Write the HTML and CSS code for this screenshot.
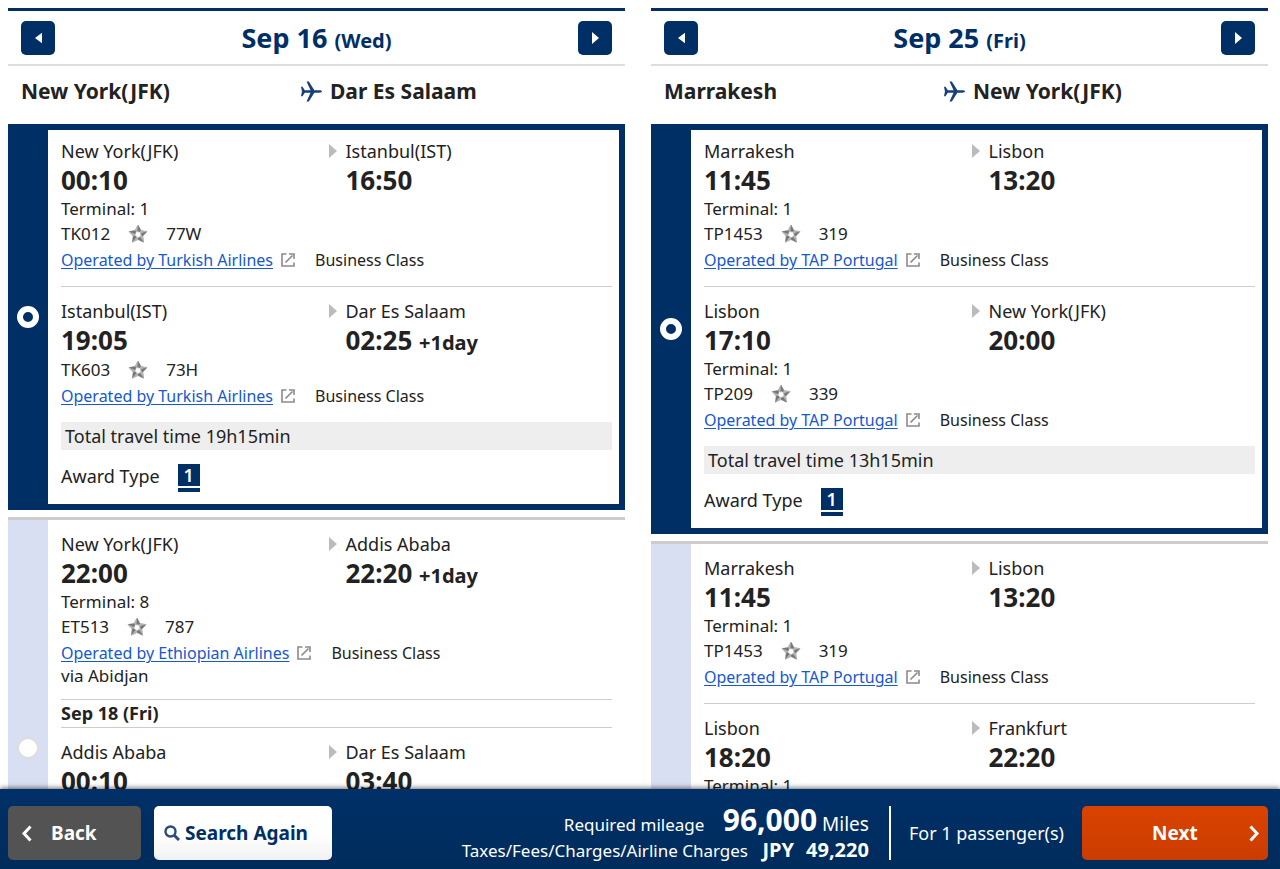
FILE: index.html
```html
<!DOCTYPE html>
<html lang="en">
<head>
<meta charset="utf-8">
<meta name="viewport" content="width=device-width, initial-scale=1">
<title>Award flight selection</title>
<link rel="stylesheet" href="styles.css">
</head>
<body>
<svg class="sprite" aria-hidden="true">
  <symbol id="plane" viewBox="0 0 22 22"><path d="M0 6h1.600L4 9.800h6L5.800.5h2.400L14 9.800h5.200c1.500 0 2.800.5 2.800 1.200s-1.300 1.200-2.800 1.200H14L8.200 21.500H5.800L10 12.200H4L1.600 16H0l1-5z"/></symbol>
  <symbol id="star" viewBox="0 0 20 20">
    <path d="M10 1 12.900 6.500 19 7.600 14.800 12 15.600 18.200 10 15.500 4.400 18.200 5.200 12 1 7.600 7.100 6.500zM8 7.700 6.700 11.500 10 14 13.300 11.500 12 7.700z" fill="#b4b4b4" stroke="#b4b4b4" fill-rule="evenodd"/>
    <path d="M10 1 12.900 6.500 12 7.700 9.500 7zM19 7.600 14.800 12 13.300 11.500 13.500 9zM15.600 18.200 10 15.500V14l2.500-.8zM4.400 18.200 5.200 12 6.700 11.500 8.500 13zM1 7.600 7.100 6.500 8 7.700 7 10z" fill="#777"/>
  </symbol>
  <symbol id="external" viewBox="0 0 14 14"><path d="M5.500 1H1v12h12V9.500M4.500 9.500l7-7M8 1h5v5" fill="none" stroke="#8a8a8a" stroke-width="1.600"/></symbol>
  <symbol id="tri-left" viewBox="0 0 8 12"><path d="M8 0v12L0 6z"/></symbol>
  <symbol id="tri-right" viewBox="0 0 8 12" preserveAspectRatio="none"><path d="M0 0v12l8-6z"/></symbol>
  <symbol id="chev-left" viewBox="0 0 11 17"><path d="M9.500 1.500 3 8.500l6.500 7" fill="none" stroke="currentColor" stroke-width="3"/></symbol>
  <symbol id="chev-right" viewBox="0 0 11 17"><path d="M1.500 1.500 8 8.500l-6.500 7" fill="none" stroke="currentColor" stroke-width="3"/></symbol>
  <symbol id="search" viewBox="0 0 16 16"><circle cx="6.500" cy="6.500" r="5" fill="none" stroke="#2c4b7c" stroke-width="2.400"/><path d="m10.500 10.500 4.500 4.500" stroke="#2c4b7c" stroke-width="3"/></symbol>
</svg>

<main class="results">
  <section class="journey">
    <header class="date-bar">
      <button class="day-button" type="button" aria-label="Previous day"><svg><use href="#tri-left"/></svg></button>
      <h2>Sep 16 <small>(Wed)</small></h2>
      <button class="day-button" type="button" aria-label="Next day"><svg><use href="#tri-right"/></svg></button>
    </header>
    <div class="route"><span>New York(JFK)</span><span class="route-to"><svg><use href="#plane"/></svg>Dar Es Salaam</span></div>

    <article class="option selected">
      <label class="pick"><input type="radio" name="outbound" aria-label="New York to Dar Es Salaam via Istanbul" checked></label>
      <div class="details">
        <div class="leg">
          <div class="stops">
            <div><p class="place">New York(JFK)</p><p class="time">00:10</p></div>
            <div class="arrival"><p class="place"><svg><use href="#tri-right"/></svg>Istanbul(IST)</p><p class="time">16:50</p></div>
          </div>
          <p class="terminal">Terminal: 1</p>
          <p class="flight">TK012<svg><use href="#star"/></svg>77W</p>
          <p class="operator"><a href="#">Operated by Turkish Airlines</a><svg><use href="#external"/></svg>Business Class</p>
        </div>
        <div class="leg">
          <div class="stops">
            <div><p class="place">Istanbul(IST)</p><p class="time">19:05</p></div>
            <div class="arrival"><p class="place"><svg><use href="#tri-right"/></svg>Dar Es Salaam</p><p class="time">02:25 <small>+1day</small></p></div>
          </div>
          <p class="flight">TK603<svg><use href="#star"/></svg>73H</p>
          <p class="operator"><a href="#">Operated by Turkish Airlines</a><svg><use href="#external"/></svg>Business Class</p>
        </div>
        <p class="total">Total travel time 19h15min</p>
        <p class="award">Award Type <span class="badge">1</span></p>
      </div>
    </article>

    <article class="option tall">
      <label class="pick"><input type="radio" name="outbound" aria-label="New York to Dar Es Salaam via Addis Ababa"></label>
      <div class="details">
        <div class="leg">
          <div class="stops">
            <div><p class="place">New York(JFK)</p><p class="time">22:00</p></div>
            <div class="arrival"><p class="place"><svg><use href="#tri-right"/></svg>Addis Ababa</p><p class="time">22:20 <small>+1day</small></p></div>
          </div>
          <p class="terminal">Terminal: 8</p>
          <p class="flight">ET513<svg><use href="#star"/></svg>787</p>
          <p class="operator"><a href="#">Operated by Ethiopian Airlines</a><svg><use href="#external"/></svg>Business Class</p>
          <p class="via">via Abidjan</p>
        </div>
        <h3 class="leg-date">Sep 18 (Fri)</h3>
        <div class="leg">
          <div class="stops">
            <div><p class="place">Addis Ababa</p><p class="time">00:10</p></div>
            <div class="arrival"><p class="place"><svg><use href="#tri-right"/></svg>Dar Es Salaam</p><p class="time">03:40</p></div>
          </div>
        </div>
      </div>
    </article>
  </section>

  <section class="journey">
    <header class="date-bar">
      <button class="day-button" type="button" aria-label="Previous day"><svg><use href="#tri-left"/></svg></button>
      <h2>Sep 25 <small>(Fri)</small></h2>
      <button class="day-button" type="button" aria-label="Next day"><svg><use href="#tri-right"/></svg></button>
    </header>
    <div class="route"><span>Marrakesh</span><span class="route-to"><svg><use href="#plane"/></svg>New York(JFK)</span></div>

    <article class="option selected">
      <label class="pick"><input type="radio" name="inbound" aria-label="Marrakesh to New York via Lisbon" checked></label>
      <div class="details">
        <div class="leg">
          <div class="stops">
            <div><p class="place">Marrakesh</p><p class="time">11:45</p></div>
            <div class="arrival"><p class="place"><svg><use href="#tri-right"/></svg>Lisbon</p><p class="time">13:20</p></div>
          </div>
          <p class="terminal">Terminal: 1</p>
          <p class="flight">TP1453<svg><use href="#star"/></svg>319</p>
          <p class="operator"><a href="#">Operated by TAP Portugal</a><svg><use href="#external"/></svg>Business Class</p>
        </div>
        <div class="leg">
          <div class="stops">
            <div><p class="place">Lisbon</p><p class="time">17:10</p></div>
            <div class="arrival"><p class="place"><svg><use href="#tri-right"/></svg>New York(JFK)</p><p class="time">20:00</p></div>
          </div>
          <p class="terminal">Terminal: 1</p>
          <p class="flight">TP209<svg><use href="#star"/></svg>339</p>
          <p class="operator"><a href="#">Operated by TAP Portugal</a><svg><use href="#external"/></svg>Business Class</p>
        </div>
        <p class="total">Total travel time 13h15min</p>
        <p class="award">Award Type <span class="badge">1</span></p>
      </div>
    </article>

    <article class="option taller">
      <label class="pick"><input type="radio" name="inbound" aria-label="Marrakesh to New York via Lisbon and Frankfurt"></label>
      <div class="details">
        <div class="leg">
          <div class="stops">
            <div><p class="place">Marrakesh</p><p class="time">11:45</p></div>
            <div class="arrival"><p class="place"><svg><use href="#tri-right"/></svg>Lisbon</p><p class="time">13:20</p></div>
          </div>
          <p class="terminal">Terminal: 1</p>
          <p class="flight">TP1453<svg><use href="#star"/></svg>319</p>
          <p class="operator"><a href="#">Operated by TAP Portugal</a><svg><use href="#external"/></svg>Business Class</p>
        </div>
        <div class="leg">
          <div class="stops">
            <div><p class="place">Lisbon</p><p class="time">18:20</p></div>
            <div class="arrival"><p class="place"><svg><use href="#tri-right"/></svg>Frankfurt</p><p class="time">22:20</p></div>
          </div>
          <p class="terminal">Terminal: 1</p>
        </div>
      </div>
    </article>
  </section>
</main>

<footer class="summary">
  <button class="action back" type="button"><svg><use href="#chev-left"/></svg>Back</button>
  <button class="action search" type="button"><svg><use href="#search"/></svg>Search Again</button>
  <div class="cost">
    <p>Required mileage <span class="miles"><strong>96,000</strong> Miles</span></p>
    <p>Taxes/Fees/Charges/Airline Charges <span class="fees"><b>JPY</b><b>49,220</b></span></p>
  </div>
  <p class="passengers">For 1 passenger(s)</p>
  <button class="action next" type="button"><span>Next</span><svg><use href="#chev-right"/></svg></button>
</footer>
</body>
</html>
```
FILE: styles.css
```css
:root {
  --navy: #002f66;
  --text: #222;
  --rule: #ccc;
}

* { box-sizing: border-box; }

body {
  margin: 0;
  height: 100vh;
  display: flex;
  flex-direction: column;
  background: #fff;
  color: var(--text);
  font: 16px/24px "Noto Sans", "Open Sans", sans-serif;
}

p, h2, h3 { margin: 0; }
button { font: inherit; border: 0; padding: 0; cursor: pointer; }
.sprite { position: absolute; width: 0; height: 0; }

.results {
  flex: 1;
  min-height: 0;
  overflow-y: auto;
  scrollbar-width: none;
  display: grid;
  grid-template-columns: 1fr 1fr;
  column-gap: 26px;
  align-items: start;
  padding: 8px 12px 0 8px;
}

.date-bar {
  display: flex;
  align-items: center;
  justify-content: space-between;
  height: 58px;
  padding: 0 13px;
  border-top: 3px solid var(--navy);
  border-bottom: 2px solid #ddd;
}
.date-bar h2 { color: var(--navy); font-size: 27px; line-height: 34px; }
.date-bar small { font-size: 20px; line-height: 20px; }

.day-button {
  display: grid;
  place-items: center;
  width: 34px;
  height: 34px;
  border-radius: 5px;
  background: var(--navy);
  fill: #fff;
}
.day-button svg { width: 7px; height: 12px; }

.route {
  display: grid;
  grid-template-columns: 280fr 311fr;
  align-items: center;
  height: 58px;
  padding: 0 13px 8px;
  font-size: 21px;
  font-weight: 700;
}
.route-to { display: flex; align-items: center; gap: 8px; }
.route svg { width: 21px; height: 21px; fill: #17407a; }

.option {
  display: flex;
  margin-bottom: 7px;
  border-top: 3px solid var(--rule);
}
.option.selected { border: 6px solid var(--navy); border-left: 0; }
.option.tall { min-height: 458px; }
.option.taller { min-height: 620px; }

.pick {
  flex: none;
  display: grid;
  place-items: center;
  width: 40px;
  background: #d8dff2;
}
.selected .pick { background: var(--navy); }
.pick input {
  appearance: none;
  width: 22px;
  height: 22px;
  margin: 0;
  border: 2px solid #ddd;
  border-radius: 50%;
  background: #fff;
}
.pick input:checked { border: 6px solid #fff; background: var(--navy); }

.details { flex: 1; min-width: 0; padding: 0 13px 12px; }
.selected .details { padding-right: 7px; }

.leg { padding: 12px 0 13px; }
.selected .leg:first-child { padding-top: 9px; }
.leg + .leg { border-top: 1px solid var(--rule); }

.stops { display: grid; grid-template-columns: 268fr 282fr; }
.place { display: flex; align-items: center; font-size: 18px; }
.place svg { width: 8px; height: 14px; margin-right: 8px; fill: #bbb; }
.arrival .time { padding-left: 16px; }
.time { font-size: 26px; font-weight: 700; line-height: 34px; }
.time small { font-size: 20px; line-height: 20px; }

.terminal, .flight, .via { font-size: 17px; }
.flight, .operator { display: flex; align-items: center; line-height: 26px; }
.flight svg { width: 20px; height: 20px; margin: 0 18px; }
.operator a { color: #1558d0; text-underline-offset: 2px; }
.operator svg { width: 14px; height: 14px; margin: 0 20px 0 8px; }
.via { line-height: 20px; }

.leg-date {
  border-top: 1px solid var(--rule);
  border-bottom: 1px solid var(--rule);
  font-size: 18px;
  line-height: 27px;
}

.total { padding: 0 4px; background: #eee; font-size: 18px; line-height: 28px; }
.award { display: flex; gap: 18px; padding-top: 14px; font-size: 18px; }
.badge {
  width: 22px;
  height: 28px;
  border-bottom: 4px solid var(--navy);
  background: linear-gradient(var(--navy) 22px, #fff 22px);
  color: #fff;
  font-weight: 600;
  line-height: 22px;
  text-align: center;
}

.summary {
  position: relative;
  display: flex;
  align-items: flex-start;
  min-height: 80px;
  padding: 17px 12px 4px 8px;
  background: linear-gradient(#003068, #002c5c);
  box-shadow: 0 -1px 5px rgba(0, 0, 0, .6);
  color: #fff;
}

.action {
  display: flex;
  align-items: center;
  height: 54px;
  border-radius: 5px;
  color: #fff;
  font-size: 19px;
  font-weight: 700;
}
.action svg { width: 11px; height: 17px; }
.back { width: 133px; padding-left: 13px; gap: 19px; background: #535353; }
.search {
  width: 178px;
  margin-left: 13px;
  padding-left: 10px;
  gap: 5px;
  background: linear-gradient(#fff 50%, #f2f2f2);
  color: var(--navy);
}
.search svg { width: 16px; height: 16px; }
.next { width: 186px; padding: 0 8px 0 70px; justify-content: space-between; background: linear-gradient(#d94300, #cc3c00); }

.cost {
  margin-left: auto;
  padding: 4px 20px 0 0;
  font-size: 17px;
  line-height: 26px;
  text-align: right;
}
.cost span, .cost strong, .cost b { line-height: 20px; }
.miles { margin-left: 14px; font-size: 19px; }
.miles strong { font-size: 30px; }
.fees { margin-left: 10px; font-size: 20px; }
.fees b + b { margin-left: 12px; }
.passengers {
  padding: 0 18px;
  border-left: 2px solid #fff;
  font-size: 18px;
  line-height: 54px;
}
```
